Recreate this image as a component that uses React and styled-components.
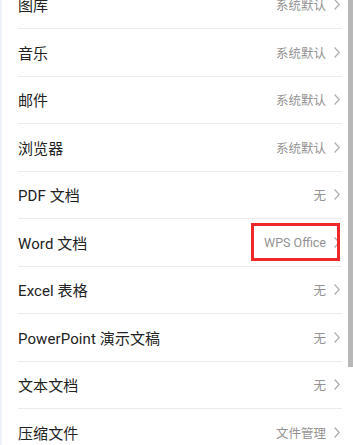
import React from "react";
import styled, { createGlobalStyle } from "styled-components";

const GlobalStyle = createGlobalStyle`
    html, body {
        margin: 0;
        padding: 0;
        background: #ffffff;
    }
    #root {
        height: 445px;
    }
`;

const Page = styled.div`
    position: relative;
    width: 353px;
    height: 445px;
    overflow: hidden;
    background: #ffffff;
    border-left: 2px solid #eef1f9;
    box-sizing: border-box;
    font-family: Roboto, "Noto Sans CJK SC", sans-serif;
`;

const List = styled.ul`
    list-style: none;
    margin: -18.5px 0 0 0;
    padding: 0 11px 0 16px;
`;

const Row = styled.li`
    position: relative;
    display: flex;
    align-items: center;
    justify-content: space-between;
    height: 46.5px;
    padding-right: 2px;
    border-bottom: 1px solid #ebebeb;
`;

const Title = styled.span`
    font-size: 15px;
    color: #222222;
    letter-spacing: 0.1px;
`;

const Value = styled.span`
    display: flex;
    align-items: center;
    gap: 8px;
    font-size: 12.5px;
    color: #939393;
`;

const Highlight = styled.div`
    position: absolute;
    top: 3.5px;
    right: 2.5px;
    width: 89px;
    height: 38px;
    border: 3px solid #f0282a;
    box-sizing: border-box;
`;

const ScrollThumb = styled.div`
    position: absolute;
    top: 0;
    right: 0;
    width: 5px;
    height: 367px;
    background: #b8b8b8;
`;

const Chevron = () => (
    <svg width="6" height="11" viewBox="0 0 6 11">
        <path
            d="M0.6 0.5 L5.2 5.5 L0.6 10.5"
            fill="none"
            stroke="#acacac"
            strokeWidth="1.2"
        />
    </svg>
);

const rows = [
    { title: "图库", value: "系统默认" },
    { title: "音乐", value: "系统默认" },
    { title: "邮件", value: "系统默认" },
    { title: "浏览器", value: "系统默认" },
    { title: "PDF 文档", value: "无" },
    { title: "Word 文档", value: "WPS Office", marked: true },
    { title: "Excel 表格", value: "无" },
    { title: "PowerPoint 演示文稿", value: "无" },
    { title: "文本文档", value: "无" },
    { title: "压缩文件", value: "文件管理" },
];

const App = () => {
    return (
        <>
            <GlobalStyle />
            <Page>
                <List>
                    {rows.map((r) => (
                        <Row key={r.title}>
                            <Title>{r.title}</Title>
                            <Value>
                                {r.value}
                                <Chevron />
                            </Value>
                            {r.marked && <Highlight />}
                        </Row>
                    ))}
                </List>
                <ScrollThumb />
            </Page>
        </>
    );
};

export default App;
